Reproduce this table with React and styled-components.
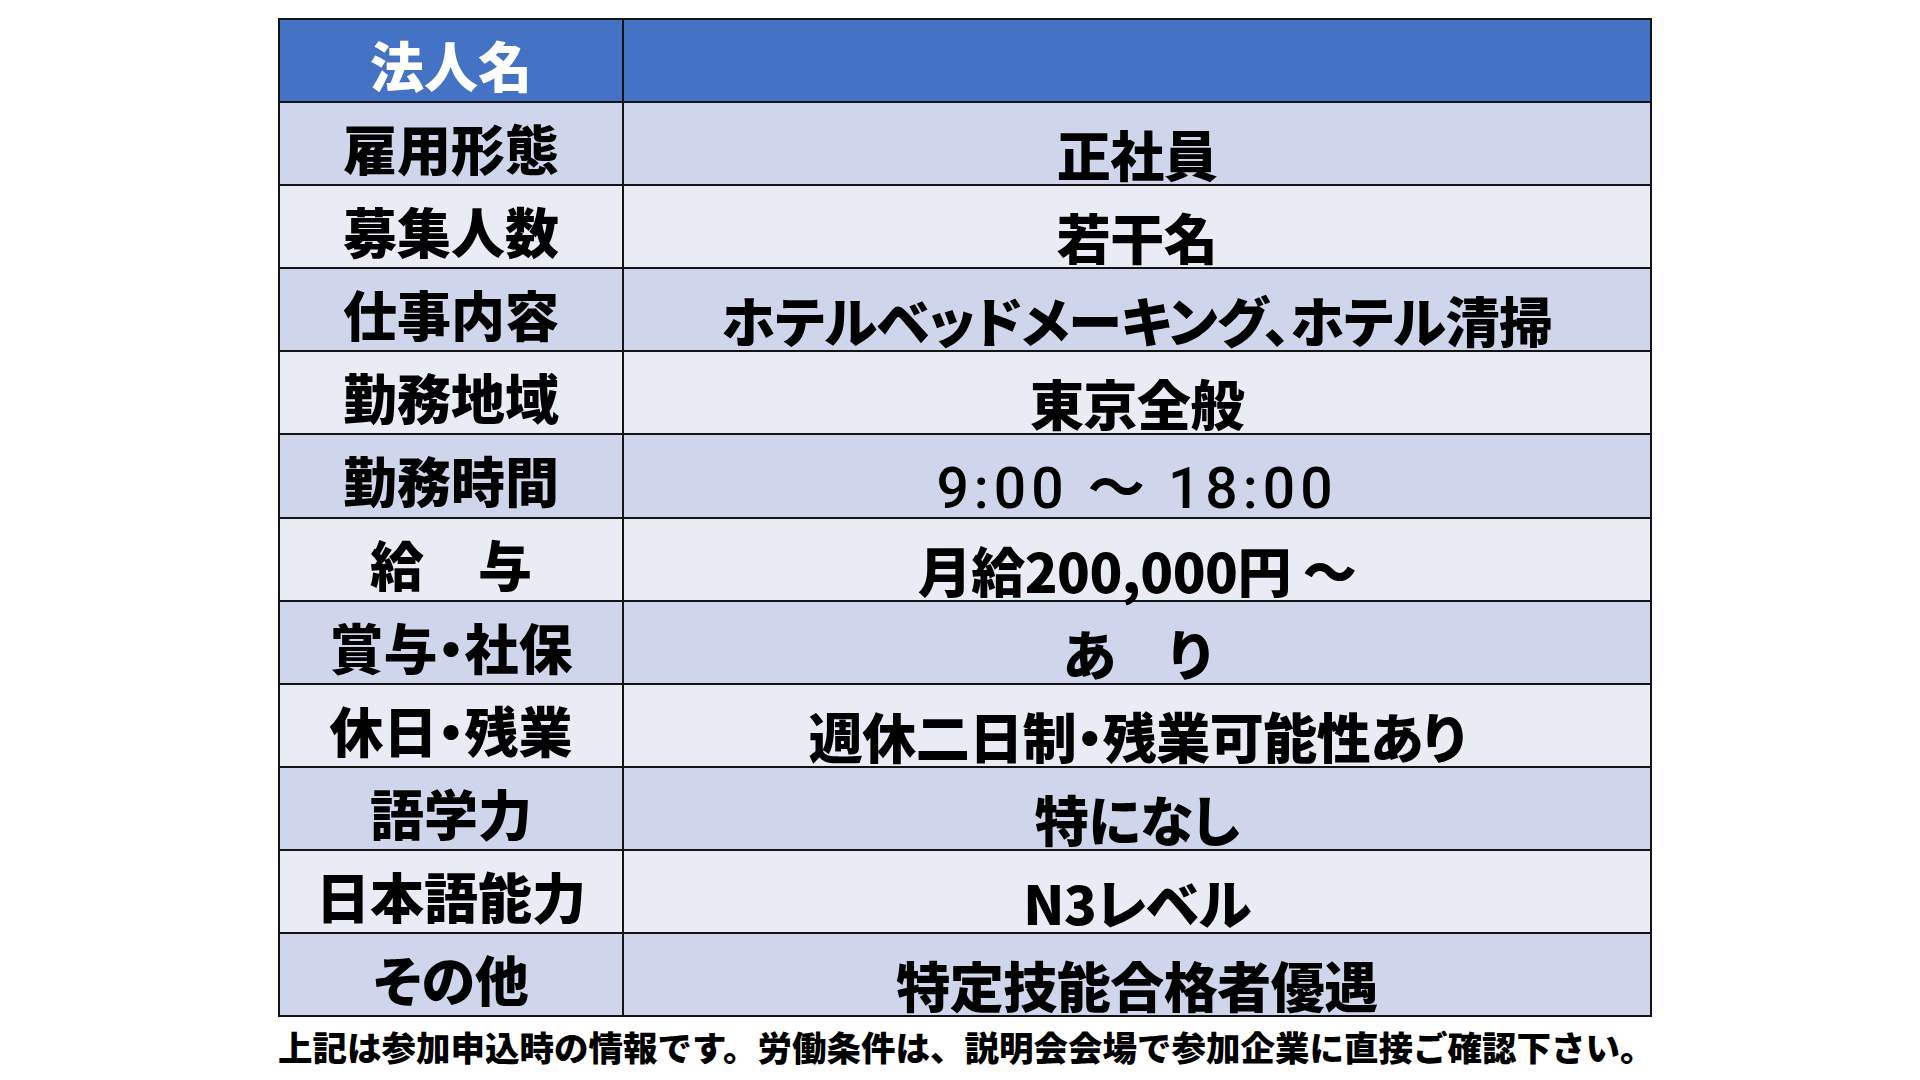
import React from 'react'
import styled, { createGlobalStyle } from 'styled-components'

const GlobalStyle = createGlobalStyle`
    html, body {
        margin: 0;
        padding: 0;
        background: #ffffff;
    }
    body {
        width: 1920px;
        height: 1080px;
        overflow: hidden;
        font-family: "Noto Sans CJK JP", "Noto Sans", sans-serif;
    }
`

const Page = styled.div`
    padding: 18px 0 0 278px;
`

const Sheet = styled.table`
    width: 1374px;
    border-collapse: collapse;
    table-layout: fixed;
    border: 2px solid #141414;
`

const Row = styled.tr`
    height: 83px;
    background: ${(p) => (p.$head ? '#4472c4' : p.$odd ? '#cfd5ea' : '#e9ebf5')};
`

const Label = styled.td`
    width: 344px;
    box-sizing: border-box;
    padding: 8px 0 0;
    border: 2px solid #141414;
    text-align: center;
    font-size: 54px;
    font-weight: 900;
    line-height: 1;
    color: ${(p) => (p.$head ? '#ffffff' : '#000000')};
    font-feature-settings: "palt";
    white-space: nowrap;
`

const Value = styled.td`
    padding: 20px 0 0;
    border: 2px solid #141414;
    text-align: center;
    font-family: ${(p) =>
        p.$latin ? 'Roboto, "Noto Sans CJK JP", sans-serif' : '"Noto Sans CJK JP", sans-serif'};
    font-size: ${(p) => (p.$latin ? '57px' : '54px')};
    font-weight: ${(p) => (p.$latin ? 500 : 900)};
    letter-spacing: ${(p) => (p.$latin ? '5px' : '-0.5px')};
    line-height: 1;
    color: #000000;
    font-feature-settings: "palt";
    white-space: nowrap;
`

const Tilde = styled.span`
    font-family: "Noto Sans CJK JP", sans-serif;
    font-weight: 700;
    letter-spacing: 0;
    margin: 0 4px 0 0;
`

const Note = styled.p`
    margin: 12px 0 0;
    font-size: 34.5px;
    font-weight: 900;
    line-height: 1;
    color: #000000;
    white-space: nowrap;
`

const rows = [
    { label: '雇用形態', value: '正社員' },
    { label: '募集人数', value: '若干名' },
    { label: '仕事内容', value: 'ホテルベッドメーキング、ホテル清掃' },
    { label: '勤務地域', value: '東京全般' },
    {
        label: '勤務時間',
        value: (
            <>
                9:00 <Tilde>～</Tilde> 18:00
            </>
        ),
        latin: true,
    },
    { label: '給　与', value: '月給200,000円 ～' },
    { label: '賞与・社保', value: 'あ　り' },
    { label: '休日・残業', value: '週休二日制・残業可能性あり' },
    { label: '語学力', value: '特になし' },
    { label: '日本語能力', value: 'N3レベル' },
    { label: 'その他', value: '特定技能合格者優遇' },
]

function App() {
    return (
        <Page>
            <GlobalStyle />
            <Sheet>
                <tbody>
                    <Row $head>
                        <Label $head>法人名</Label>
                        <Value></Value>
                    </Row>
                    {rows.map((r, i) => (
                        <Row key={r.label} $odd={i % 2 === 0}>
                            <Label>{r.label}</Label>
                            <Value $latin={r.latin}>{r.value}</Value>
                        </Row>
                    ))}
                </tbody>
            </Sheet>
            <Note>上記は参加申込時の情報です。労働条件は、説明会会場で参加企業に直接ご確認下さい。</Note>
        </Page>
    )
}

export default App
